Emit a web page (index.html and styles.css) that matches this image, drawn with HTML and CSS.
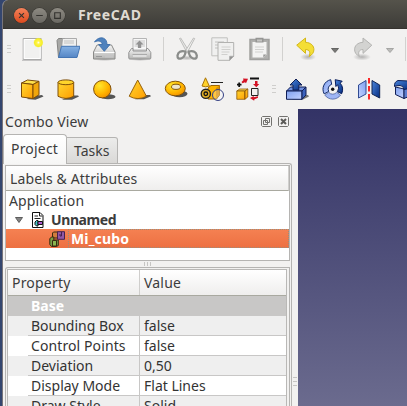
FILE: index.html
```html
<!DOCTYPE html>
<html lang="en">
<head>
<meta charset="utf-8">
<title>FreeCAD</title>
<link rel="stylesheet" href="styles.css">
</head>
<body>
<svg class="defs" width="0" height="0" aria-hidden="true">
  <defs>
    <linearGradient id="gold" x1="0" y1="0" x2="1" y2="1"><stop offset="0" stop-color="#ffd832"/><stop offset="1" stop-color="#ff9c00"/></linearGradient>
    <radialGradient id="ball" cx=".35" cy=".3" r=".8"><stop offset="0" stop-color="#ffe62e"/><stop offset=".6" stop-color="#ffb400"/><stop offset="1" stop-color="#f08c00"/></radialGradient>
    <linearGradient id="blue" x1="0" y1="0" x2="1" y2="1"><stop offset="0" stop-color="#7fa0ef"/><stop offset="1" stop-color="#c4d2ff"/></linearGradient>
    <linearGradient id="navy" x1="0" y1="0" x2="1" y2="1"><stop offset="0" stop-color="#4a86dc"/><stop offset="1" stop-color="#062c80"/></linearGradient>
    <linearGradient id="metal" x1="0" y1="0" x2="0" y2="1"><stop offset="0" stop-color="#f6f6f6"/><stop offset="1" stop-color="#b4b4b2"/></linearGradient>
    <linearGradient id="folder" x1="0" y1="0" x2="0" y2="1"><stop offset="0" stop-color="#86b2e4"/><stop offset="1" stop-color="#5586c5"/></linearGradient>
    <radialGradient id="glow"><stop offset="0" stop-color="#fffff0"/><stop offset=".3" stop-color="#fff44a"/><stop offset=".75" stop-color="#f5ee28"/><stop offset="1" stop-color="#f5ee28" stop-opacity="0"/></radialGradient>
    <radialGradient id="shade"><stop offset="0" stop-color="#555" stop-opacity=".4"/><stop offset="1" stop-color="#555" stop-opacity="0"/></radialGradient>
  </defs>
</svg>
<div class="window">
  <header class="titlebar">
    <span class="wbtn close"><svg viewBox="0 0 16 16"><path d="M5.4 5.4l5.2 5.2M10.6 5.4l-5.2 5.2"/></svg></span>
    <span class="wbtn"><svg viewBox="0 0 16 16"><path d="M4.5 8h7"/></svg></span>
    <span class="wbtn"><svg viewBox="0 0 16 16"><path d="M5 5h6v6H5z"/></svg></span>
    <span class="title">FreeCAD</span>
  </header>

  <div class="toolbar file">
    <i class="grip"></i>
    <svg class="ic" viewBox="0 0 24 24"><path d="M2 23.3h20" stroke="#bbb"/><path d="M3.2 1.5h18v21h-18z" fill="#f1f1f0" stroke="#aaa"/><path d="M4.2 2.5h16v19h-16z" fill="none" stroke="#fff"/><circle cx="18.4" cy="5.6" r="5.2" fill="url(#glow)"/></svg>
    <svg class="ic" viewBox="0 0 24 24"><path d="M1 3.5l1.5-2h6l1 2h11v17H2.5z" fill="#a8a8a6" stroke="#858583"/><path d="M6.5 1.5h14v10h-15z" fill="#f0f0ef" stroke="#999" stroke-width=".8"/><path d="M8 4h10M8 6h10" stroke="#c0c0c0"/><path d="M5.5 9.3H24L21 20.5H2.5z" fill="url(#folder)" stroke="#4475b3"/></svg>
    <svg class="ic" viewBox="0 0 24 24"><ellipse cx="12.5" cy="22.3" rx="11" ry="1.8" fill="url(#shade)"/><path d="M1.500 15L5 8h14.500l3.500 7v7h-21.500z" fill="url(#metal)" stroke="#8a8a88" stroke-linejoin="round"/><path d="M2.500 15.500h20" stroke="#fff"/><path d="M4 19.500h6" stroke="#999"/><path d="M13 17.500h8v3h-8z" fill="#c5c5c5"/><path d="M2.500 5C4.500 2 8-.1 11.500 1.200 14 2.200 15 4.500 15 7.500h3L12.300 14.300 6.500 7.500h3.700C10 4.500 6.500 3 2.500 5z" fill="#4f82bd" stroke="#376aa7" stroke-width=".8"/></svg>
    <svg class="ic" viewBox="0 0 24 24"><ellipse cx="12" cy="22.5" rx="11" ry="1.500" fill="url(#shade)"/><path d="M5 1.500h13.500V13H5z" fill="#f7f7f7" stroke="#b5b5b5"/><path d="M6.500 3h10.500v7H6.500z" fill="#dedede"/><path d="M11.500 3.500l4 4h-2.300v3.500H9.900V7.500H7.600z" fill="#929292"/><path d="M3.500 11.500H5V14h13.500v-2.500h1.500l2.800 4v5.500q0 1-1 1H1.800q-1 0-1-1v-5.500z" fill="url(#metal)" stroke="#929292"/><path d="M5 19h13.500" stroke="#f7f7f7"/><path d="M4.500 17.500h14.500" stroke="#aaa"/></svg>
    <i class="sep"></i>
    <svg class="ic" viewBox="0 0 24 24"><ellipse cx="12" cy="21" rx="9" ry="2.500" fill="url(#shade)"/><path d="M4.500 1.500l1.200-.5 8.800 14-2.300 1z" fill="#e8e8e7" stroke="#b8b8b6" stroke-width=".9"/><path d="M19.700 1.500l-1.200-.5-8.800 14 2.300 1z" fill="#f1f1f0" stroke="#b8b8b6" stroke-width=".9"/><path d="M10.500 14.500q-7-1.500-8 4-.2 4 3.700 3 4-1.500 4.300-7zm3.300 0q7-1.500 8 4 .2 4-3.700 3-4-1.500-4.300-7z" fill="none" stroke="#8b8d8b" stroke-width="2.300"/></svg>
    <svg class="ic" viewBox="0 0 24 24"><g fill="#f0f0ef" stroke="#c0c0be"><path d="M.8.800h15.500v18H.8z"/><path d="M4 5h9M4 8h6M4 11h4"/><path d="M7 5.500h15.700v13.800l-4 4H7z" stroke="#b2b2b0"/><path d="M10.500 10h9M10.500 12.500h9M10.500 15h8M10.500 17.500h6" stroke="#d0d0ce"/></g><path d="M22.700 19.300h-4v4z" fill="#929290" stroke="#aaa"/></svg>
    <svg class="ic" viewBox="0 0 24 24"><path d="M3 2.500h19v20H3z" fill="#b0b0ae" stroke="#a0a09e" stroke-width="1.500"/><path d="M5.500 5h14v12.500l-3 3h-11z" fill="#f3f3f2"/><path d="M8 10h9M8 12.500h9M8 15h8" stroke="#d1d1cf"/><path d="M8.500.800h8v4.700h-8z" fill="#969694"/><path d="M10 2.500h5v2h-5z" fill="#c5c5c3"/><path d="M19.500 17.500h-3.200v3z" fill="#989896"/></svg>
    <i class="sep"></i>
    <svg class="ic" viewBox="0 0 24 24"><ellipse cx="14" cy="20" rx="8" ry="3.500" fill="url(#shade)"/><path d="M2.700 8.200L11.500 1v4.300c5.500.3 8.500 3.500 8.400 7.500-.1 3-1.800 5-4.900 6.700 1.800-3.500.8-7-3.500-7v3.900z" fill="#f4de36" stroke="#d3b719" stroke-linejoin="round"/></svg>
    <svg class="drop" viewBox="0 0 12 24"><path d="M2.500 11.500h7L6 15.500z" fill="#777775" stroke="#666664"/></svg>
    <svg class="ic redo" viewBox="0 0 24 24"><ellipse cx="11" cy="20" rx="9" ry="3.500" fill="url(#shade)"/><path d="M20.800 8.200L12 1v4.300c-5.500.3-8.500 3.500-8.400 7.500.1 3 1.800 5 4.900 6.700-1.800-3.500-.8-7 3.500-7v3.900z" fill="#d3d3d1" stroke="#b4b4b2" stroke-linejoin="round"/></svg>
    <svg class="drop" viewBox="0 0 12 24"><path d="M2.500 11.500h7L6 15.500z" fill="#bcbcba" stroke="#a6a6a4"/></svg>
    <i class="sep last"></i>
  </div>

  <div class="toolbar part">
    <i class="grip"></i>
    <svg class="ic" viewBox="0 0 24 24"><path d="M13 19l9-1 1.500 1.500-8 3.200-9-.700z" fill="#555"/><g fill="url(#gold)" stroke="#7c4b08" stroke-linejoin="round"><path d="M1.500 6l6-3L19 4.300 13 7.500z" fill="#ffe24c"/><path d="M1.500 6L13 7.500v14L1.500 20z"/><path d="M13 7.500l6-3.200v13.500l-6 3.700z" fill="#f0a60c"/></g></svg>
    <svg class="ic" viewBox="0 0 24 24"><path d="M15 18.500h7l1 1-7 3.200H6z" fill="#555"/><path d="M2 5.300v14q8 4.200 15.700 0v-14" fill="url(#gold)" stroke="#805009"/><ellipse cx="9.850" cy="5.300" rx="7.850" ry="2.400" fill="#ffd52b" stroke="#805009"/></svg>
    <svg class="ic" viewBox="0 0 24 24"><ellipse cx="16" cy="19.700" rx="7.500" ry="2.500" fill="#555"/><circle cx="10.300" cy="12.200" r="8.700" fill="url(#ball)" stroke="#805009"/></svg>
    <svg class="ic" viewBox="0 0 24 24"><path d="M15 18h7l1 1.200-7 3H7z" fill="#555"/><path d="M9.700 3L1.200 19.200q8.500 4.800 17.200 0z" fill="url(#gold)" stroke="#96610b" stroke-linejoin="round"/></svg>
    <svg class="ic" viewBox="0 0 24 24"><ellipse cx="15.500" cy="16.800" rx="8" ry="3.400" fill="#555"/><ellipse cx="11.300" cy="11.500" rx="10" ry="7.300" fill="url(#ball)" stroke="#85560a"/><ellipse cx="12" cy="9.800" rx="4.500" ry="2.600" fill="#efe6cc" stroke="#85560a"/></svg>
    <svg class="ic" viewBox="0 0 24 24"><path d="M8 11l3-2.500h8.500V18l-3 4H8z" fill="#ffb500" stroke="#9b6509"/><path d="M16 11l3.500-2.500V18L16 21z" fill="#d98f08"/><path d="M5.500.800L2 9q3.700 1.700 7.300 0z" fill="#ffd22b" stroke="#a87208"/><path d="M11 5.500h12" stroke="#222"/><circle cx="5.800" cy="16.800" r="4.600" fill="#e1ad24" stroke="#222" stroke-width="1.400"/><circle cx="5.800" cy="16.800" r="1.800" fill="none" stroke="#111" stroke-width="1.300"/><circle cx="18" cy="18" r="5.500" fill="#fff" fill-opacity=".25" stroke="#354184"/></svg>
    <svg class="ic" viewBox="0 0 24 24"><path d="M.800 14l3-2h8l-3 2z" fill="#ffe05a" stroke="#8d5908" stroke-width=".8"/><path d="M.800 14h8v8.300h-8zM8.800 14l3-2v8l-3 2.300z" fill="url(#gold)" stroke="#8d5908" stroke-width=".8"/><path d="M3.200 5.500v4.500M1 7.700h4.500" stroke="#111" stroke-width="1.800"/><path d="M14 1.500h9" stroke="#111" stroke-width="1.800"/><path d="M15.500 11.500h6.500v7h-6.500z" fill="none" stroke="#222"/><path d="M5.500 5L7.500 3 7 1.500 12 1.800l-2 4.500-1-1-2.500 1zM19 4h2.500v3h1.800l-3 3.300L17 7h2zM22 20.800l-3.800 1.600v1.300l-4.200-2.700 3.800-2v1.200l4.200-.9z" fill="#d41224"/></svg>
    <i class="grip second"></i>
    <svg class="ic" viewBox="0 0 24 24"><path d="M14 18h9l1 1.500-6 3H7z" fill="#777"/><g stroke="#101e55" stroke-linejoin="round"><path d="M1.500 14l4-4H21l-4 4z" fill="#7190df"/><path d="M1.500 14H17v8.300H1.500z" fill="url(#blue)"/><path d="M17 14l4-4v8l-4 4.300z" fill="#3c62bd"/><path d="M11 2l6 6h-3.200v5H8V8H5z" fill="url(#navy)"/></g></svg>
    <svg class="ic" viewBox="0 0 24 24"><g transform="translate(11.700 12.200)"><path d="M-2-9.500A9.700 9.700 0 0 0-8.500 4.700L-4 2.200A5 5 0 0 1-1-4.900z" fill="url(#blue)" stroke="#102968"/><path d="M-7.800 6A9.700 9.700 0 0 0 7.800 6L4 3A5 5 0 0 1-4 3z" fill="#9eb5f5" stroke="#415896" stroke-width=".7"/><path d="M9 4.500Q11.500-1.500 7.500-6l2-2L2.500-9.500l.7 6.800L5-4.500Q7-1 4.800 2.500z" fill="url(#navy)" stroke="#081b57"/><circle r="1.700" fill="#111"/></g></svg>
    <svg class="ic" viewBox="0 0 24 24"><path d="M1.500 3.500L9 8v13l-7.500-4z" fill="url(#blue)" stroke="#314b91" transform="matrix(-1 0 0 1 10.500 0)"/><path d="M15 3.500L22.700 8v13L15 17z" fill="url(#navy)" stroke="#102552"/><path d="M12 1v22" stroke="#fd1212" stroke-width="1.800" stroke-dasharray="5.500 2.500"/></svg>
    <svg class="ic" viewBox="0 0 24 24"><g stroke="#101e55" stroke-linejoin="round"><path d="M2.500 10v7.500l8.500 4V12z" fill="url(#blue)"/><path d="M11 12l6-2v9l-6 2.500z" fill="#5f7fd0"/><path d="M1.500 9.500Q1 5 5 3.500L16 4v7.500l-5 1Q10.500 8.500 7 8.500T1.500 9.500z" fill="url(#navy)"/></g></svg>
  </div>

  <main class="work">
    <section class="dock">
      <div class="dockhead">
        <span class="docktitle">Combo View</span>
        <svg class="dbtn" viewBox="0 0 11 11"><path d="M1.500.500h8l1 1v8l-1 1h-8l-1-1v-8z"/><path d="M4.500 2.500h4v4h-4zM2.500 4.500h4v4h-4z"/></svg>
        <svg class="dbtn" viewBox="0 0 11 11"><path d="M1.500.500h8l1 1v8l-1 1h-8l-1-1v-8z"/><path class="cross" d="M3 3l5 5M8 3L3 8"/></svg>
      </div>
      <div class="tabs"><div class="tab active">Project</div><div class="tab">Tasks</div></div>
      <div class="pane">
        <div class="tree">
          <div class="thead">Labels &amp; Attributes</div>
          <div class="trow app">Application</div>
          <div class="trow doc">
            <svg class="expander" viewBox="0 0 8 6"><path d="M.5.500h7L4 5.500z"/></svg>
            <svg class="docicon" viewBox="0 0 12 16"><path d="M.5.500h7.500l3 3V15.500H.5z" fill="#fff" stroke="#111"/><path d="M7.500 1v3h3M2.500 4h3.500M2.500 6.500h6" stroke="#222" fill="none"/><path d="M6 8.500H4.500L3 10v2.500L4.500 14H6z" stroke="#111" fill="#47c5c8"/><path d="M6 9.500h4.500v3H6z" fill="#ae58d0" stroke="#111"/></svg>
            <b class="docname">Unnamed</b>
          </div>
          <div class="trow selected">
            <svg class="cubeicon" viewBox="0 0 16 16"><g stroke="#3b2a10"><path d="M3.500 2l1-1H9v6H3.500z" fill="#d07c3d"/><path d="M.800 7.500l2-1.500h2v3h4.500v5.500l-2 1H2.500L.800 13.500z" fill="#78a044"/><path d="M3.500 9.500h4v5.500h-4z" fill="#8bb54e"/><path d="M8.500.700h7v7.600h-7z" fill="#9357a5" stroke="#46214f"/></g><path d="M12.500 1v4H11V3" stroke="#46214f" fill="none"/></svg>
            <div class="selname"><b>Mi_cubo</b></div>
          </div>
        </div>
        <div class="splitter"><i></i><i></i><i></i></div>
        <div class="props">
          <div class="table">
            <div class="phead"><div class="cell">Property</div><div class="cell">Value</div></div>
            <div class="prow group"><b>Base</b></div>
            <div class="prow alt"><div class="name">Bounding Box</div><div class="val">false</div></div>
            <div class="prow"><div class="name wide">Control Points</div><div class="val">false</div></div>
            <div class="prow alt"><div class="name">Deviation</div><div class="val">0,50</div></div>
            <div class="prow"><div class="name">Display Mode</div><div class="val">Flat Lines</div></div>
            <div class="prow alt"><div class="name">Draw Style</div><div class="val">Solid</div></div>
          </div>
        </div>
      </div>
    </section>
    <div class="handle"><i></i><i></i><i></i></div>
    <section class="view"></section>
  </main>
</div>
</body>
</html>
```
FILE: styles.css
```css
* { box-sizing: border-box; }
body {
  margin: 0;
  width: 407px;
  height: 406px;
  overflow: hidden;
  background: #34466f;
  color: #3c3c3c;
  font: 14px/20px "Noto Sans", "Open Sans", sans-serif;
  white-space: nowrap;
}
.defs { display: block; position: absolute; }
svg { display: block; flex: none; }
.window {
  margin-left: 2px;
  height: 406px;
  border-left: 1px solid #77747a;
  background: #f2f1f0;
  border-top-left-radius: 6px;
  display: flex;
  flex-direction: column;
  overflow: hidden;
}

.titlebar {
  flex: none;
  height: 29px;
  padding: 2px 0 0 11px;
  display: flex;
  align-items: center;
  gap: 3px;
  background: linear-gradient(#55534b, #3d3c38);
  border-bottom: 1px solid #36332f;
}
.wbtn {
  width: 15px;
  height: 15px;
  border-radius: 50%;
  background: linear-gradient(#8d8a82, #6a6862);
  box-shadow: 0 0 0 .5px #35342f;
}
.wbtn svg { width: 15px; height: 15px; fill: none; stroke: #34332f; stroke-width: 1.2; }
.wbtn.close { background: linear-gradient(#f4835b, #dc4a1e); }
.title {
  margin: -1px 0 0 10px;
  color: #dfdbd2;
  font-weight: 700;
  font-size: 14px;
  letter-spacing: .6px;
}

.toolbar {
  flex: none;
  height: 40px;
  padding-left: 4px;
  display: flex;
  align-items: center;
  gap: 12px;
}
.ic { width: 24px; height: 24px; }
.grip {
  flex: none;
  width: 4px;
  height: 8px;
  margin-right: -3px;
  background: linear-gradient(#cfcecc 0 1px, transparent 1px 3px, #cfcecc 3px 4px, transparent 4px 7px, #cfcecc 7px);
}
.sep { flex: none; width: 1px; height: 24px; margin: 0 -1px; background: #d2d1cf; }
.drop { width: 12px; height: 24px; margin-left: -1px; }
.redo { margin-left: -2px; }
.redo + .drop { margin-left: -3px; }
.sep.last { margin-left: -3px; }

.work { flex: 1; min-height: 0; display: flex; }
.dock { width: 289px; flex: none; display: flex; flex-direction: column; }
.dockhead {
  flex: none;
  height: 25px;
  padding: 0 3px 0 2px;
  display: flex;
  align-items: center;
  gap: 6px;
}
.docktitle { flex: 1; letter-spacing: .17px; }
.dbtn { width: 11px; height: 11px; fill: none; stroke: #73726f; }
.cross { stroke: #5c5b58; stroke-width: 2; }

.tabs { flex: none; height: 30px; display: flex; align-items: flex-end; }
.tab {
  width: 51px;
  height: 27px;
  padding: 3px 0 0 7px;
  border: 1px solid #b5b4b2;
  border-left: 0;
  border-radius: 0 3px 0 0;
  background: linear-gradient(#ececeb, #dad9d7);
}
.tab.active {
  z-index: 1;
  width: 64px;
  height: 30px;
  padding: 4px 0 0 7px;
  border: 1px solid #b5b4b2;
  border-bottom: 0;
  border-radius: 4px 4px 0 0;
  background: linear-gradient(#fff, #f6f6f5);
  letter-spacing: .2px;
}

.pane {
  flex: 1;
  min-height: 0;
  margin-top: -1px;
  padding: 1px 1px 0 2px;
  border-top: 1px solid #b5b4b2;
  border-right: 1px solid #b5b4b2;
  border-top-right-radius: 3px;
  display: flex;
  flex-direction: column;
}
.tree {
  flex: none;
  height: 96px;
  background: #fff;
  border: 1px solid #b5b4b2;
}
.thead {
  height: 25px;
  padding: 3px 0 0 4px;
  border-bottom: 1px solid #a9a9a0;
  border-right: 1px solid #d0cfcd;
  background: linear-gradient(#fff, #efeeed);
  letter-spacing: .13px;
}
.trow { height: 19px; padding-left: 3px; display: flex; align-items: center; }
.app { letter-spacing: .13px; }
.doc { padding-left: 9px; }
.docname { letter-spacing: -.4px; }
.expander { width: 8px; height: 6px; fill: #858585; stroke: #5d5d5d; }
.docicon { width: 12px; height: 16px; margin: 0 7px 0 9px; }
.trow.selected { padding-left: 43px; background: linear-gradient(#f58152, #ed7042); color: #fff; }
.cubeicon { width: 16px; height: 16px; margin-right: 3px; }
.selname {
  flex: 1;
  height: 19px;
  padding-left: 2px;
  line-height: 17px;
  letter-spacing: .15px;
  border: 1px dotted #968f80;
}
.splitter { flex: none; height: 6px; padding-left: 139px; display: flex; gap: 2px; align-items: center; }
.splitter i { width: 1px; height: 4px; background: #c6c5c3; }

.props {
  flex: 1;
  min-height: 0;
  padding: 1px;
  border: 1px solid #b5b4b2;
  border-bottom: 0;
  border-top-left-radius: 3px;
  overflow: hidden;
}
.table { border: 1px solid #b9b8b6; border-bottom: 0; margin-right: 1px; background: #fff; }
.phead {
  height: 26px;
  display: flex;
  background: linear-gradient(#fff, #efeeed);
  border-bottom: 1px solid #a9a9a0;
}
.cell { padding: 3px 0 0 4px; letter-spacing: .2px; }
.cell:first-child { width: 132px; border-right: 1px solid #cfcecc; }
.prow { height: 20px; display: flex; color: #333; }
.prow.group { padding-left: 23px; background: #c8c7c6; color: #fff; }
.name { width: 112px; margin-left: 20px; padding-left: 3px; border-right: 1px solid #c8c7c6; border-bottom: 1px solid #c8c7c6; }
.wide { letter-spacing: .1px; }
.val { flex: 1; padding-left: 4px; border-bottom: 1px solid #c8c7c6; }
.prow.alt { background: #efefef; }

.handle {
  flex: none;
  width: 6px;
  padding-bottom: 20px;
  display: flex;
  flex-direction: column;
  justify-content: flex-end;
  align-items: center;
  gap: 3px;
}
.handle i { width: 4px; height: 1px; background: #c6c5c3; }
.view { flex: 1; background: linear-gradient(#333366, #6b6b8e); }
```
